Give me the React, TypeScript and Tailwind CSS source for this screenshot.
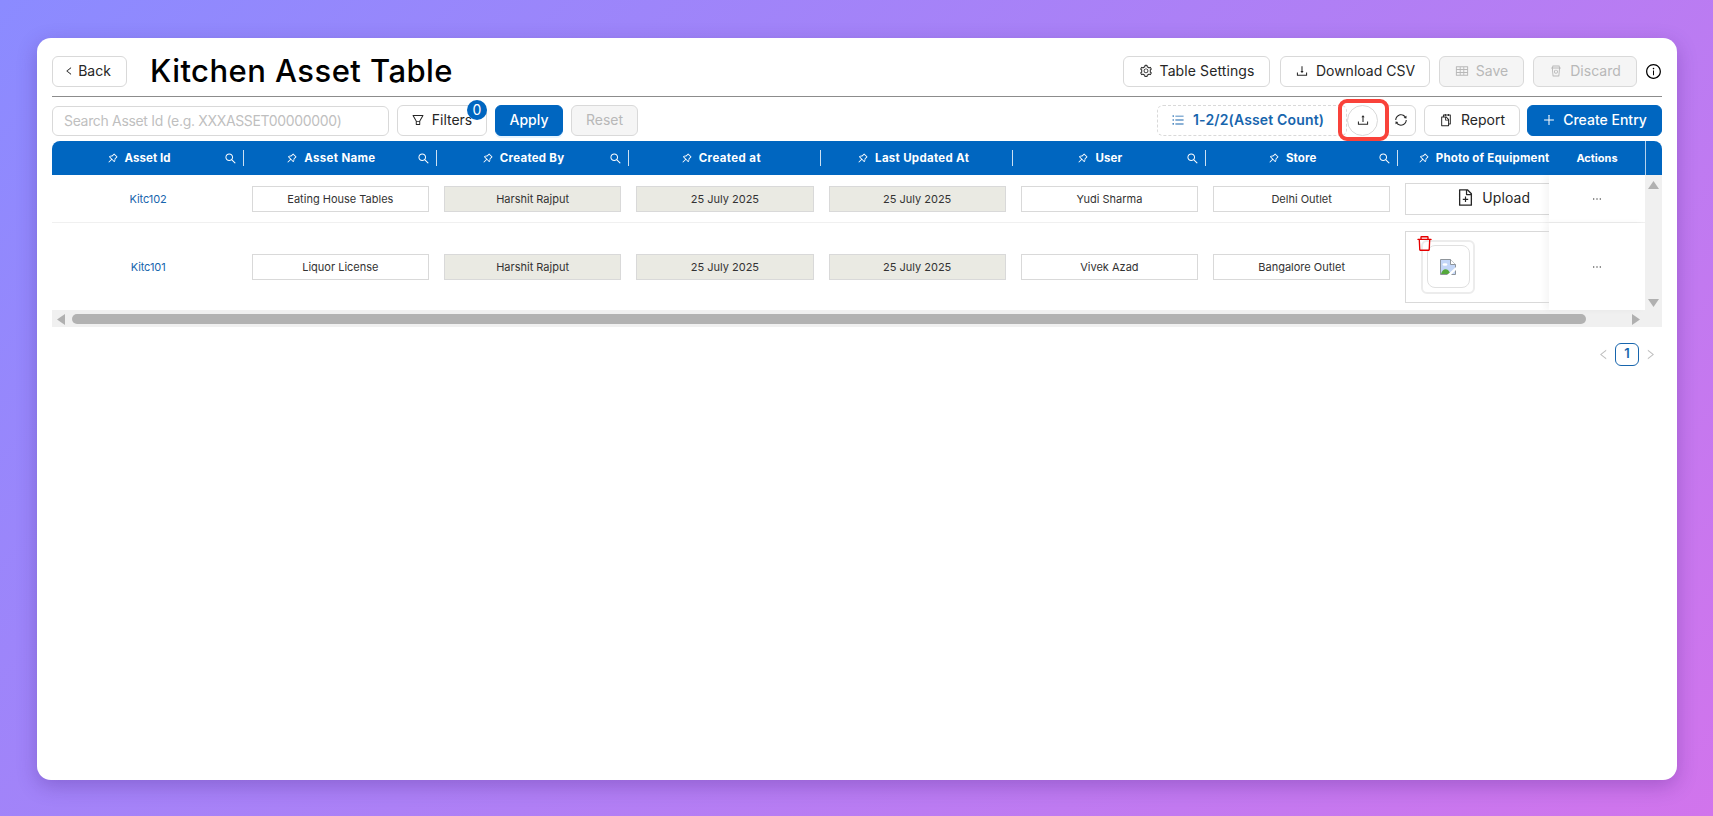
import React from 'react';
import {
    AiOutlineDelete,
    AiOutlineDownload,
    AiOutlineEllipsis,
    AiOutlineFileAdd,
    AiOutlineFilter,
    AiOutlineInfoCircle,
    AiOutlineLeft,
    AiOutlinePlus,
    AiOutlinePushpin,
    AiOutlineRest,
    AiOutlineRight,
    AiOutlineSearch,
    AiOutlineSetting,
    AiOutlineSnippets,
    AiOutlineSync,
    AiOutlineTable,
    AiOutlineUnorderedList,
    AiOutlineUpload,
} from 'react-icons/ai';

const COLUMNS = [
    { title: 'Asset Id', search: true, spacing: 'tracking-[0.05px]' },
    { title: 'Asset Name', search: true, spacing: 'tracking-[0.35px]' },
    { title: 'Created By', search: true, spacing: 'tracking-[0.25px]' },
    { title: 'Created at', search: false, spacing: 'tracking-[0.4px]' },
    { title: 'Last Updated At', search: false, spacing: 'tracking-[0.3px]' },
    { title: 'User', search: true, spacing: 'tracking-[0.1px]' },
    { title: 'Store', search: true, spacing: 'tracking-[0.1px]' },
];

const ROWS = [
    { id: 'Kitc102', name: 'Eating House Tables', user: 'Yudi Sharma', store: 'Delhi Outlet', photo: false },
    { id: 'Kitc101', name: 'Liquor License', user: 'Vivek Azad', store: 'Bangalore Outlet', photo: true },
];

function Button({ className = '', round = false, children }: { className?: string; round?: boolean; children: React.ReactNode }) {
    return (
        <button className={`flex h-[31px] shrink-0 items-center justify-center whitespace-nowrap border pb-px text-sm ${round ? 'rounded-full' : 'rounded-md'} ${className}`}>
            {children}
        </button>
    );
}

function Cell({ value, locked }: { value: string; locked?: boolean }) {
    return (
        <div className="w-[192.25px] shrink-0 px-[7.5px]">
            <div className={`flex h-[26px] items-center justify-center border border-[#d9d9d9] pt-px text-[11px] text-[#333] ${locked ? 'bg-[#eaeae3]' : 'bg-white'}`}>
                {value}
            </div>
        </div>
    );
}

function BrokenImage() {
    return (
        <svg width="16" height="16" viewBox="0 0 16 16">
            <path d="M.5.5h10l5 5v10H.5z" fill="#c3d6f7" stroke="#8f959b" />
            <path d="M10.5.5v5h5" fill="#fff" stroke="#8f959b" />
            <ellipse cx="5" cy="5.5" rx="2.5" ry="1.3" fill="#fff" />
            <path d="M1 15c1-4 4-6 7-4l3 4z" fill="#55a83b" />
            <path d="M7 16l9-8v3l-5 5z" fill="#fff" />
        </svg>
    );
}

export default function App() {
    return (
        <div className="h-[816px] w-[1713px] overflow-hidden bg-[linear-gradient(135deg,#8b8bff_0%,#d174ec_100%)] px-[37px] pt-[38px] pb-9 font-['Inter',sans-serif]">
            <div className="h-[742px] w-[1640px] overflow-hidden rounded-[14px] bg-white px-[15px] pt-[18px] shadow-[0_6px_20px_rgba(60,20,120,0.28)]">

                {/* Page header */}
                <div className="flex h-[41px] items-start border-b border-[#8c8c8c]">
                    <Button className="w-[75px] gap-1 border-[#d9d9d9] pr-1 text-[#262626]">
                        <AiOutlineLeft size={10} />
                        Back
                    </Button>
                    <h1 className="ml-[23px] whitespace-nowrap text-[31px] leading-[29px] font-medium tracking-[0.45px] text-black">Kitchen Asset Table</h1>
                    <div className="ml-auto flex items-center">
                        <Button className="w-[147px] gap-[7px] border-[#d9d9d9] tracking-[0.1px] text-[#262626]">
                            <AiOutlineSetting size={14} />
                            Table Settings
                        </Button>
                        <Button className="ml-[10px] w-[150px] gap-[7px] border-[#d9d9d9] text-[#262626]">
                            <AiOutlineDownload size={14} />
                            Download CSV
                        </Button>
                        <Button className="ml-[9px] w-[85px] gap-[7px] border-[#d9d9d9] bg-[#f5f5f5] text-[#b8b8b8]">
                            <AiOutlineTable size={14} />
                            Save
                        </Button>
                        <Button className="ml-[9px] w-[104px] gap-[7px] border-[#d9d9d9] bg-[#f5f5f5] text-[#b8b8b8]">
                            <AiOutlineRest size={14} />
                            Discard
                        </Button>
                        <AiOutlineInfoCircle size={17} className="ml-2 text-black" />
                    </div>
                </div>

                {/* Toolbar */}
                <div className="flex h-11 items-start pt-2">
                    <input
                        type="text"
                        placeholder="Search Asset Id (e.g. XXXASSET00000000)"
                        className="mt-px h-[30px] w-[337px] rounded-md border border-[#d9d9d9] px-[11px] pb-0.5 text-sm tracking-[-0.33px] placeholder:text-[#bfbfbf] focus:outline-none"
                    />
                    <div className="relative ml-2">
                        <Button className="w-[90px] gap-[7px] border-[#d9d9d9] pr-px text-[#262626]">
                            <AiOutlineFilter size={14} />
                            Filters
                        </Button>
                        <span className="absolute -top-[5px] right-0 flex size-5 items-center justify-center rounded-full bg-[#0066c0] pb-px text-sm text-white">0</span>
                    </div>
                    <Button className="ml-2 w-[68px] border-[#0066c0] bg-[#0066c0] font-medium text-white shadow-[0_2px_0_rgba(5,145,255,0.1)]">Apply</Button>
                    <Button className="ml-2 w-[67px] border-[#d9d9d9] bg-[#f5f5f5] text-[#b8b8b8]">Reset</Button>

                    <div className="relative ml-auto flex">
                        <Button className="w-[190px] justify-start gap-[8px] border-dashed border-[#d9d9d9] pl-[13px] font-semibold tracking-[0.15px] text-[#1765ad]">
                            <AiOutlineUnorderedList size={14} />
                            1-2/2(Asset Count)
                        </Button>
                        <Button round className="w-[31px] border-[#d9d9d9] text-[#262626]">
                            <AiOutlineUpload size={14} />
                        </Button>
                        <Button className="ml-[7px] w-[31px] border-[#d9d9d9] text-[#262626]">
                            <AiOutlineSync size={14} />
                        </Button>
                        {/* Highlight around the upload button */}
                        <div className="absolute -top-1.5 left-[181px] h-[42px] w-[51px] rounded-[9px] border-4 border-[#f9423a]" />
                    </div>
                    <Button className="ml-2 w-[96px] gap-[8px] border-[#d9d9d9] text-[#262626]">
                        <AiOutlineSnippets size={14} />
                        Report
                    </Button>
                    <Button className="ml-[7px] w-[135px] gap-[7px] border-[#0066c0] bg-[#0066c0] font-medium text-white">
                        <AiOutlinePlus size={14} />
                        Create Entry
                    </Button>
                </div>

                {/* Table */}
                <div className="flex h-[34px] items-center overflow-hidden rounded-t-lg bg-[#0066c0] text-[11.5px] font-bold text-white">
                    {COLUMNS.map((column) => (
                        <div key={column.title} className={`relative flex h-4 w-[192.25px] shrink-0 items-center justify-center gap-[6px] border-r border-white/80 ${column.search ? 'pr-[18px]' : 'pr-[7px]'}`}>
                            <AiOutlinePushpin size={12} />
                            <span className={`pt-px ${column.spacing}`}>{column.title}</span>
                            {column.search && <AiOutlineSearch size={13} className="absolute right-[6px]" />}
                        </div>
                    ))}
                    <div className="flex min-w-0 flex-1 items-center gap-[6px] pl-5 tracking-[0.18px] whitespace-nowrap">
                        <AiOutlinePushpin size={12} className="shrink-0" />
                        <span className="pt-px">Photo of Equipment</span>
                    </div>
                    <div className="flex h-full w-[97px] shrink-0 items-center justify-center border-r border-white/70 text-[11px]">Actions</div>
                    <div className="w-4 shrink-0" />
                </div>
                <div className="flex h-[135px]">
                    <div className="min-w-0 flex-1">
                        {ROWS.map((row) => (
                            <div key={row.id} className={`flex items-center ${row.photo ? 'h-[87px]' : 'h-12 border-b border-[#f0f0f0]'}`}>
                                <div className="w-[192.25px] shrink-0 pt-px text-center text-[11px] tracking-[-0.1px] text-[#1765ad]">{row.id}</div>
                                <Cell value={row.name} />
                                <Cell value="Harshit Rajput" locked />
                                <Cell value="25 July 2025" locked />
                                <Cell value="25 July 2025" locked />
                                <Cell value={row.user} />
                                <Cell value={row.store} />
                                <div className="min-w-0 flex-1 overflow-hidden pl-[7.5px]">
                                    {row.photo ? (
                                        <div className="relative flex h-[72px] items-center border border-r-0 border-[#d9d9d9] pl-[15px]">
                                            <div className="flex size-[54px] items-center justify-center rounded-md border-2 border-[#ececec]">
                                                <div className="flex size-[43px] items-center justify-center rounded-lg border border-[#e0e0e0]">
                                                    <BrokenImage />
                                                </div>
                                            </div>
                                            <AiOutlineDelete size={19} className="absolute top-[2px] left-[9px] text-[#e60000]" />
                                        </div>
                                    ) : (
                                        <div className="flex h-8 items-center gap-[7px] border border-r-0 border-[#d9d9d9] pb-0.5 pl-[50px] text-sm tracking-[0.1px] text-[#262626]">
                                            <AiOutlineFileAdd size={19} />
                                            Upload
                                        </div>
                                    )}
                                </div>
                                <div className="flex h-full w-24 shrink-0 items-center justify-center bg-white shadow-[-4px_0_6px_rgba(0,0,0,0.04)]">
                                    <AiOutlineEllipsis size={12} className="text-[#333]" />
                                </div>
                            </div>
                        ))}
                    </div>
                    <div className="flex w-[17px] shrink-0 flex-col items-center justify-between bg-[#f0f0f0] pt-1.5 pb-[3px] text-[#b0b0b0]">
                        <svg width="11" height="8" viewBox="0 0 11 8"><path d="M5.5 0L11 8H0z" fill="currentColor" /></svg>
                        <svg width="11" height="8" viewBox="0 0 11 8"><path d="M5.5 8L11 0H0z" fill="currentColor" /></svg>
                    </div>
                </div>
                <div className="flex h-[17px] items-center bg-[#f0f0f0] pt-px pl-[5px] text-[#b0b0b0]">
                    <svg width="8" height="11" viewBox="0 0 8 11"><path d="M0 5.5L8 0v11z" fill="currentColor" /></svg>
                    <div className="ml-[7px] h-[10px] w-[1514px] rounded-full bg-[#b2b2b2]" />
                    <svg width="8" height="11" viewBox="0 0 8 11" className="ml-[46px]"><path d="M8 5.5L0 0v11z" fill="currentColor" /></svg>
                </div>

                {/* Pagination */}
                <div className="mt-4 flex items-center justify-end gap-[5px] pr-[5px] text-[#bfbfbf]">
                    <AiOutlineLeft size={13} />
                    <span className="flex h-[23px] w-6 items-center justify-center rounded-md border border-[#1765ad] pb-px text-[13px] font-semibold text-[#1765ad]">1</span>
                    <AiOutlineRight size={13} />
                </div>
            </div>
        </div>
    );
}
